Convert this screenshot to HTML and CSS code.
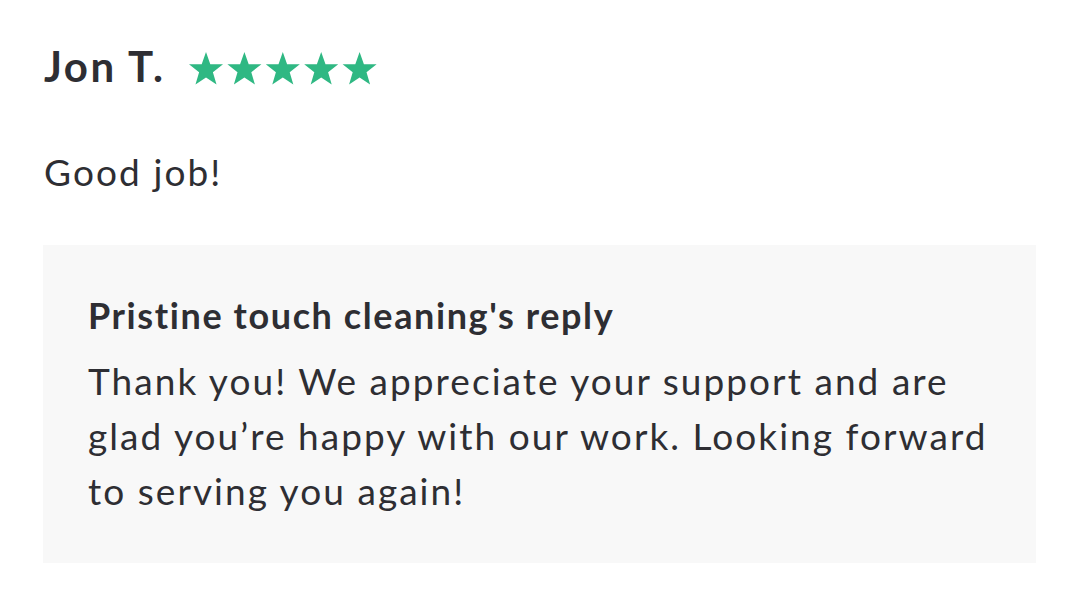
FILE: index.html
```html
<!DOCTYPE html>
<html>
<head>
<meta charset="utf-8">
<link rel="stylesheet" href="styles.css">
</head>
<body>
<div class="review">
  <div class="header">
    <span class="name">Jon T.</span>
    <svg class="stars" width="188" height="33" viewBox="0 0 188 33" aria-label="5 stars">
      <defs>
        <path id="st" d="M17 0 L21.3 12.2 L34.02 12.37 L23.9 20.2 L27.52 32.38 L17 25.4 L6.48 32.38 L10.1 20.2 L0 12.37 L12.7 12.2 Z"/>
      </defs>
      <use href="#st" x="0" fill="#2fb883"/>
      <use href="#st" x="38.4" fill="#2fb883"/>
      <use href="#st" x="76.8" fill="#2fb883"/>
      <use href="#st" x="115.2" fill="#2fb883"/>
      <use href="#st" x="153.6" fill="#2fb883"/>
    </svg>
  </div>
  <p class="comment">Good job!</p>
  <div class="reply">
    <div class="reply-title">Pristine touch cleaning's reply</div>
    <p class="reply-text">Thank you! We appreciate your support and are glad you’re happy with our work. Looking forward to serving you again!</p>
  </div>
</div>
</body>
</html>
```
FILE: styles.css
```css
html, body {
  margin: 0;
  padding: 0;
  background: #ffffff;
}
body {
  font-family: Lato, "Noto Sans", sans-serif;
  color: #2e2e33;
}
.review {
  padding: 41px 44px 0 43px;
}
.header {
  display: flex;
  align-items: flex-start;
  gap: 23px;
  height: 50px;
  padding-left: 1px;
}
.name {
  font-size: 42px;
  font-weight: 700;
  line-height: 50px;
  letter-spacing: 2.5px;
}
.stars {
  display: block;
  margin-top: 11px;
}
.comment {
  margin: 58px 0 0 0;
  padding-left: 1px;
  font-size: 37px;
  line-height: 46px;
  letter-spacing: 2.1px;
}
.reply {
  margin-top: 50px;
  background: #f8f8f8;
  padding: 48px 38px 45px 45px;
  width: 993px;
  box-sizing: border-box;
}
.reply-title {
  font-size: 36px;
  font-weight: 700;
  line-height: 44px;
  letter-spacing: 1.6px;
}
.reply-text {
  margin: 16px 0 0 0;
  font-size: 37px;
  line-height: 55px;
  letter-spacing: 2.05px;
}
```
